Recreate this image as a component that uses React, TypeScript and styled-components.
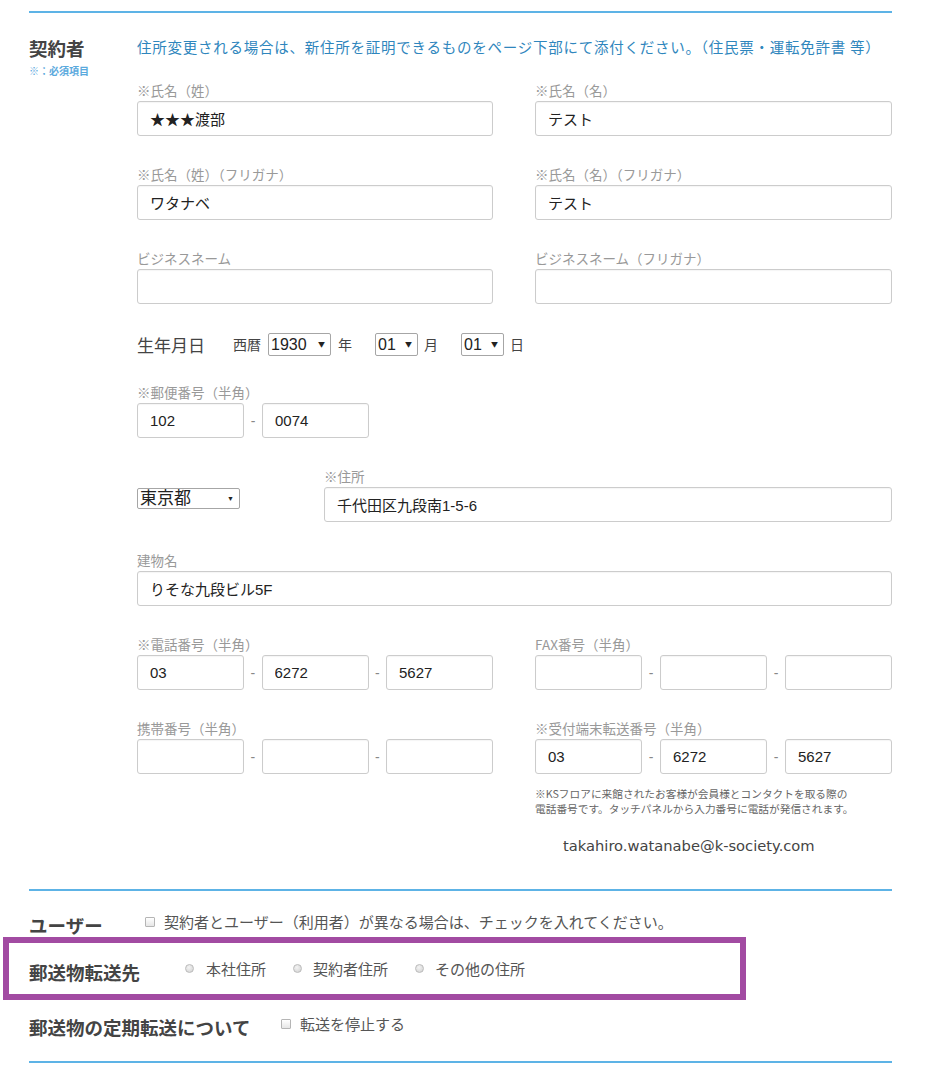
import React from "react";
import styled, { createGlobalStyle } from "styled-components";

const GlobalStyle = createGlobalStyle`
  body {
    margin: 0;
    background: #fff;
    font-family: "Liberation Sans", "Noto Sans CJK JP", sans-serif;
    color: #333;
  }
`;

const Page = styled.div`
  width: 863px;
  padding: 11px 0 0 29px;
`;

const Rule = styled.hr<{ $gap: number }>`
  border: 0;
  height: 2px;
  background: #5db3e6;
  margin: 0 0 ${(p) => p.$gap}px;
`;

const Section = styled.section`
  display: grid;
  grid-template-columns: 108px 1fr;
`;

const Heading = styled.div`
  display: flex;
  flex-direction: column;
  gap: 4px;
`;

const Title = styled.h2`
  margin: 0;
  font-size: 18.5px;
  line-height: 22px;
  font-weight: bold;
  color: #444;
  font-family: "Noto Sans CJK JP", sans-serif;
`;

const Required = styled.span`
  font-size: 10px;
  font-weight: bold;
  color: #5aa9dd;
  font-family: "Noto Sans CJK JP", sans-serif;
`;

const Notice = styled.p`
  margin: 0;
  padding-top: 1px;
  font-size: 14.5px;
  line-height: 18px;
  letter-spacing: 0.75px;
  color: #2f86bd;
  white-space: nowrap;
  font-family: "Noto Sans CJK JP", sans-serif;
`;

const Grid = styled.div<{ $mt: number }>`
  display: grid;
  grid-template-columns: 356px 357px;
  column-gap: 42px;
  row-gap: 30px;
  margin-top: ${(p) => p.$mt}px;
`;

const Field = styled.div`
  display: flex;
  flex-direction: column;
`;

const Label = styled.label`
  font-size: 13.5px;
  line-height: 16px;
  color: #999;
  margin-bottom: 3px;
  font-family: "Noto Sans CJK JP", sans-serif;
`;

const Input = styled.input<{ $w?: number }>`
  box-sizing: border-box;
  width: ${(p) => (p.$w ? `${p.$w}px` : "100%")};
  height: 35px;
  border: 1px solid #ccc;
  border-radius: 3px;
  padding: 0 12px;
  font-size: 15px;
  color: #222;
  font-family: "Liberation Sans", "Noto Sans CJK JP", sans-serif;
  box-shadow: inset 0 1px 1px rgba(0, 0, 0, 0.04);
  outline: none;
`;

const Split = styled.div`
  display: flex;
  align-items: center;
`;

const Dash = styled.span`
  width: 18px;
  text-align: center;
  color: #888;
  font-size: 14px;
`;

const BirthRow = styled.div`
  display: flex;
  align-items: center;
  margin-top: 28px;
  height: 24px;
  font-family: "Noto Sans CJK JP", sans-serif;
`;

const BirthTitle = styled.span`
  font-size: 17px;
  color: #444;
  width: 96px;
`;

const Small = styled.span<{ $ml?: number }>`
  font-size: 14px;
  color: #444;
  margin-left: ${(p) => p.$ml ?? 0}px;
`;

const SelectBox = styled.span<{ $w: number; $h: number; $fs: number; $ml?: number }>`
  display: inline-flex;
  align-items: center;
  box-sizing: border-box;
  width: ${(p) => p.$w}px;
  height: ${(p) => p.$h}px;
  margin-left: ${(p) => p.$ml ?? 0}px;
  border: 1px solid #a6a6a6;
  border-radius: 2px;
  background: #fff;
  padding: 0 5px 0 2px;

  select {
    appearance: none;
    border: 0;
    background: transparent;
    flex: 1;
    min-width: 0;
    font-size: ${(p) => p.$fs}px;
    font-family: "Liberation Sans", "Noto Sans CJK JP", sans-serif;
    color: #222;
    padding: 0;
    outline: none;
  }
`;

const Caret = styled.span`
  font-size: 7px;
  color: #222;
`;

const Block = styled.div<{ $mt: number }>`
  margin-top: ${(p) => p.$mt}px;
`;

const AddressRow = styled.div`
  display: grid;
  grid-template-columns: 187px 1fr;
  align-items: end;
  margin-top: 30px;
`;

const SelectCell = styled.div`
  display: flex;
  align-items: flex-start;
  height: 35px;
  padding-top: 1px;
  box-sizing: border-box;
`;

const Notes = styled.p`
  margin: 12px 0 0;
  font-size: 10.7px;
  line-height: 15px;
  color: #666;
  white-space: nowrap;
  font-family: "Noto Sans CJK JP", sans-serif;
`;

const Email = styled.div`
  margin: 21px 0 0 28px;
  line-height: 18px;
  color: #444;
  font-family: "DejaVu Sans", sans-serif;
  font-size: 14.7px;
`;

const OptRow = styled.div<{ $h: number }>`
  display: flex;
  align-items: center;
  height: ${(p) => p.$h}px;
`;

const OptTitle = styled.span<{ $w: number }>`
  width: ${(p) => p.$w}px;
  font-size: 18.5px;
  font-weight: bold;
  color: #444;
  white-space: nowrap;
  font-family: "Noto Sans CJK JP", sans-serif;
  padding-top: 6px;
`;

const Choice = styled.label<{ $ml?: number; $gap: number }>`
  display: inline-flex;
  align-items: center;
  gap: ${(p) => p.$gap}px;
  margin-left: ${(p) => p.$ml ?? 0}px;
  font-size: 15px;
  color: #555;
  white-space: nowrap;
  font-family: "Noto Sans CJK JP", sans-serif;
`;

const Box = styled.span`
  width: 8px;
  height: 8px;
  border: 1px solid #b5b5b5;
  border-radius: 1px;
  background: linear-gradient(#fff, #e6e6e6);
`;

const Dot = styled.span`
  width: 9px;
  height: 9px;
  border-radius: 50%;
  border: 1px solid #bbb;
  box-sizing: border-box;
  background: radial-gradient(circle at 40% 35%, #f4f4f4, #cfcfcf);
`;

const Highlight = styled.div`
  margin-left: -26px;
  width: 743px;
  box-sizing: border-box;
  border: 6px solid #a24ba2;
  padding-left: 20px;
`;

type Props = { label: string; value?: string };

const TextField = ({ label, value }: Props) => (
  <Field>
    <Label>{label}</Label>
    <Input defaultValue={value ?? ""} />
  </Field>
);

const TripleField = ({ label, values }: { label: string; values: string[] }) => (
  <Field>
    <Label>{label}</Label>
    <Split>
      <Input $w={107} defaultValue={values[0]} />
      <Dash>-</Dash>
      <Input $w={107} defaultValue={values[1]} />
      <Dash>-</Dash>
      <Input $w={107} defaultValue={values[2]} />
    </Split>
  </Field>
);

const Select = (props: { w: number; h: number; fs: number; ml?: number; value: string }) => (
  <SelectBox $w={props.w} $h={props.h} $fs={props.fs} $ml={props.ml}>
    <select defaultValue={props.value}>
      <option>{props.value}</option>
    </select>
    <Caret>▼</Caret>
  </SelectBox>
);

export default function App() {
  return (
    <Page>
      <GlobalStyle />
      <Rule $gap={24} />
      <Section>
        <Heading>
          <Title>契約者</Title>
          <Required>※：必須項目</Required>
        </Heading>
        <div>
          <Notice>
            住所変更される場合は、新住所を証明できるものをページ下部にて添付ください。（住民票・運転免許書 等）
          </Notice>
          <Grid $mt={26}>
            <TextField label="※氏名（姓）" value="★★★渡部" />
            <TextField label="※氏名（名）" value="テスト" />
            <TextField label="※氏名（姓）（フリガナ）" value="ワタナベ" />
            <TextField label="※氏名（名）（フリガナ）" value="テスト" />
            <TextField label="ビジネスネーム" />
            <TextField label="ビジネスネーム（フリガナ）" />
          </Grid>

          <BirthRow>
            <BirthTitle>生年月日</BirthTitle>
            <Small>西暦</Small>
            <Select w={63} h={23} fs={16} ml={7} value="1930" />
            <Small $ml={7}>年</Small>
            <Select w={43} h={23} fs={16} ml={23} value="01" />
            <Small $ml={6}>月</Small>
            <Select w={43} h={23} fs={16} ml={23} value="01" />
            <Small $ml={6}>日</Small>
          </BirthRow>

          <Block $mt={28}>
            <Field>
              <Label>※郵便番号（半角）</Label>
              <Split>
                <Input $w={107} defaultValue="102" />
                <Dash>-</Dash>
                <Input $w={107} defaultValue="0074" />
              </Split>
            </Field>
          </Block>

          <AddressRow>
            <SelectCell>
              <Select w={103} h={21} fs={17} value="東京都" />
            </SelectCell>
            <TextField label="※住所" value="千代田区九段南1-5-6" />
          </AddressRow>

          <Block $mt={30}>
            <TextField label="建物名" value="りそな九段ビル5F" />
          </Block>

          <Grid $mt={30}>
            <TripleField label="※電話番号（半角）" values={["03", "6272", "5627"]} />
            <TripleField label="FAX番号（半角）" values={["", "", ""]} />
            <TripleField label="携帯番号（半角）" values={["", "", ""]} />
            <div>
              <TripleField label="※受付端末転送番号（半角）" values={["03", "6272", "5627"]} />
              <Notes>
                ※KSフロアに来館されたお客様が会員様とコンタクトを取る際の
                <br />
                電話番号です。タッチパネルから入力番号に電話が発信されます。
              </Notes>
              <Email>takahiro.watanabe@k-society.com</Email>
            </div>
          </Grid>
        </div>
      </Section>

      <Block $mt={34}>
        <Rule $gap={15} />
      </Block>

      <OptRow $h={31}>
        <OptTitle $w={116}>ユーザー</OptTitle>
        <Choice $gap={9}>
          <Box />
          契約者とユーザー（利用者）が異なる場合は、チェックを入れてください。
        </Choice>
      </OptRow>

      <Highlight>
        <OptRow $h={51}>
          <OptTitle $w={156}>郵送物転送先</OptTitle>
          <Choice $gap={12}>
            <Dot />
            本社住所
          </Choice>
          <Choice $ml={27} $gap={11}>
            <Dot />
            契約者住所
          </Choice>
          <Choice $ml={27} $gap={11}>
            <Dot />
            その他の住所
          </Choice>
        </OptRow>
      </Highlight>

      <OptRow $h={47}>
        <OptTitle $w={252}>郵送物の定期転送について</OptTitle>
        <Choice $gap={9}>
          <Box />
          転送を停止する
        </Choice>
      </OptRow>

      <Block $mt={14}>
        <Rule $gap={0} />
      </Block>
    </Page>
  );
}
